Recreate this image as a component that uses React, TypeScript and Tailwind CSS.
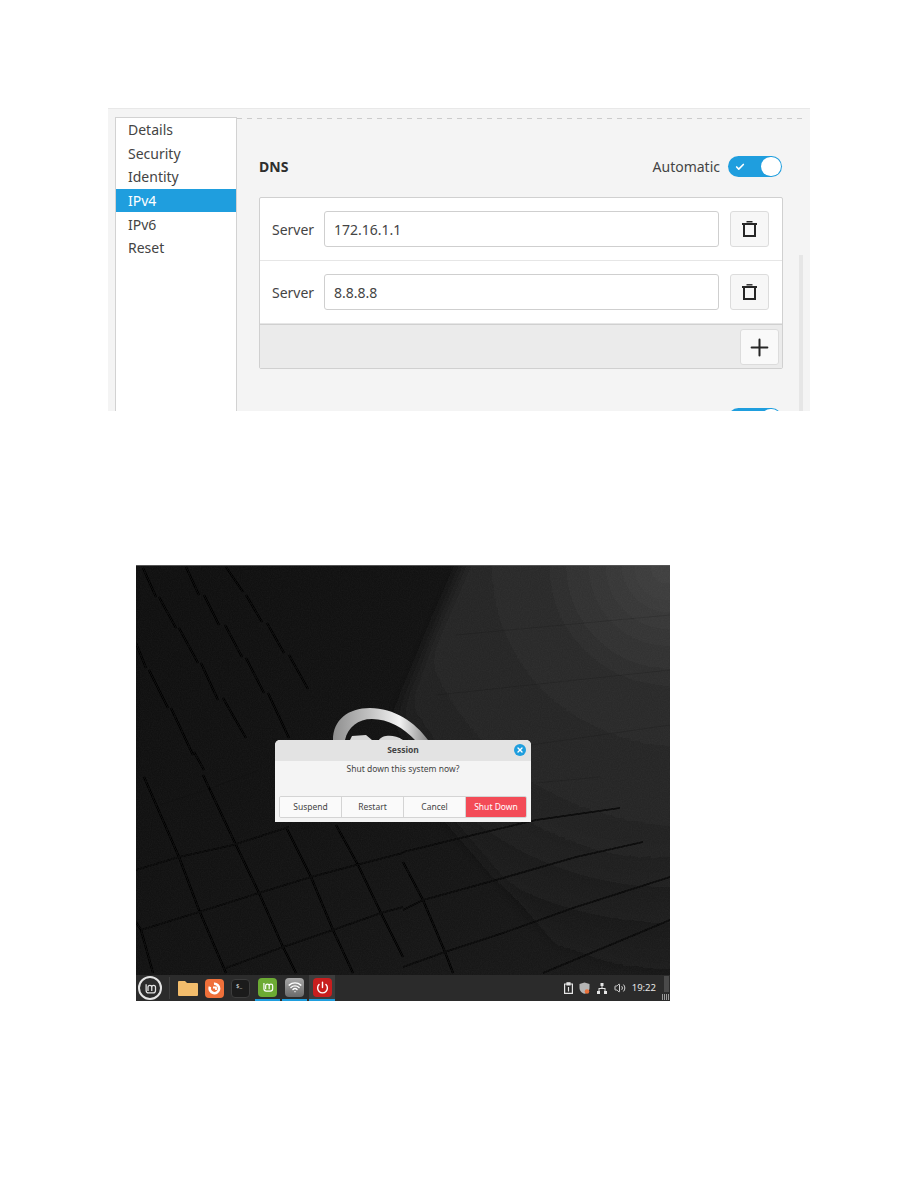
import { Check, Plus, Power, Wifi, X, Volume2 } from "lucide-react";

const FONT = "font-['Noto_Sans','Open_Sans',sans-serif]";
const TABS = ["Details", "Security", "Identity", "IPv4", "IPv6", "Reset"];

function TrashIcon() {
  return (
    <svg width="15" height="16" viewBox="0 0 15 16" fill="none" stroke="#262626" strokeWidth="2">
      <path d="M0 3h15" />
      <path d="M4.5 .8h6" strokeWidth="1.4" />
      <path d="M2 4v11h11V4" />
    </svg>
  );
}

function Toggle() {
  return (
    <div className="flex items-center justify-between w-[54px] h-[21px] shrink-0 rounded-full bg-[#1f9ede] pl-[7px] pr-px">
      <Check size={10} strokeWidth={4} className="text-white" />
      <div className="w-[20px] h-[19px] rounded-full bg-white" />
    </div>
  );
}

function ServerRow({ value }: { value: string }) {
  return (
    <div className="flex items-center h-[63px] pl-[12px] pr-[13px] border-b border-[#e6e6e6]">
      <span className="w-[52px] text-[14px] text-[#444444]">Server</span>
      <div className="flex items-center w-[395px] h-[36px] px-[9px] bg-white border border-[#cfcfcf] rounded-[3px] text-[14px] text-[#444444]">
        {value}
      </div>
      <button className="flex items-center justify-center w-[39px] h-[36px] ml-[11px] bg-[#f7f7f7] border border-[#dcdcdc] rounded-[3px]">
        <TrashIcon />
      </button>
    </div>
  );
}

function SettingsPanel() {
  return (
    <div className="flex w-[702px] h-[303px] ml-[108px] overflow-hidden bg-[#f4f4f4] border-t border-[#e8e8e8]">
      <div className="w-[122px] h-[320px] ml-[7px] mt-[8px] shrink-0 bg-white border border-[#d2d2d2]">
        {TABS.map((t) => (
          <div
            key={t}
            className={`flex items-center h-[23.6px] pl-[12px] text-[14px] ${t === "IPv4" ? "bg-[#1f9ede] text-white" : "text-[#444444]"}`}
          >
            {t}
          </div>
        ))}
      </div>
      <div className="flex-1 mt-[9px]">
        <div className="h-px mr-[8px] bg-[repeating-linear-gradient(90deg,#cccccc_0_5px,transparent_5px_10px)]" />
        <div className="flex">
          <div className="w-[524px] ml-[22px] shrink-0">
            <div className="flex items-center justify-between h-[21px] mt-[37px] pr-px">
              <span className="text-[14px] font-bold text-[#2e2e2e]">DNS</span>
              <div className="flex items-center gap-[8px]">
                <span className="text-[14px] text-[#444444]">Automatic</span>
                <Toggle />
              </div>
            </div>
            <div className="mt-[20px] h-[172px] bg-white border border-[#d0d0d0] rounded-[2px] overflow-hidden">
              <ServerRow value="172.16.1.1" />
              <ServerRow value="8.8.8.8" />
              <div className="flex justify-end items-center h-[45px] pr-[3px] bg-[#ebebeb] border-t border-[#d0d0d0]">
                <button className="flex items-center justify-center w-[39px] h-[36px] bg-[#f9f9f9] border border-[#dcdcdc] rounded-[3px]">
                  <Plus size={27} strokeWidth={1.8} className="text-[#262626]" />
                </button>
              </div>
            </div>
            <div className="flex justify-end mt-[39px] pr-px">
              <Toggle />
            </div>
          </div>
          <div className="w-[4px] h-[200px] ml-[16px] mt-[136px] bg-[#e6e6e6]" />
        </div>
      </div>
    </div>
  );
}

// wallpaper: dark extruded blocks, plus the silver edge of the mint logo
function Wallpaper() {
  const shadows = [
    "M7 3L20 32", "M23 32L40 63", "M43 63L62 98", "M65 98L82 135",
    "M50 2L63 30", "M68 30L83 60", "M89 60L106 92", "M110 93L128 128",
    "M90 2L107 27", "M110 30L126 57", "M131 58L148 88", "M153 90L172 124",
    "M0 78L10 103", "M13 105L32 143", "M35 143L57 190", "M58 187L68 205",
    "M87 133L110 173", "M132 128L153 173",
    "M8 212L43 292L63 345L90 408",
    "M67 210L100 280L123 328L147 382L160 408",
    "M150 262L175 312L197 365L217 408",
    "M200 260L222 300L245 348L267 392",
    "M0 357L5 365L17 408",
    "M267 297L287 335L309 387L317 408",
  ];
  const rising = [
    "M0 305L43 292L97 280L153 262",
    "M5 365L63 347L123 328L175 312L220 300L267 288",
    "M90 403L147 382L197 365L245 348L267 342",
    "M267 287L337 270L400 255L484 243",
    "M267 345L287 335L360 315L440 292L507 277",
    "M267 402L309 387L367 368L437 343L534 312",
    "M407 408L534 355",
  ];
  const faint = [
    "M23 240L70 225L123 205",
    "M400 218L464 212",
    "M290 195L534 160",
    "M300 130L534 105",
    "M320 70L534 50",
  ];
  return (
    <svg className="absolute inset-0" width="534" height="410" viewBox="0 0 534 410">
      <defs>
        <linearGradient id="base" x1="0" y1="0.2" x2="1" y2="0.9">
          <stop offset="0" stopColor="#101010" />
          <stop offset="0.45" stopColor="#131313" />
          <stop offset="1" stopColor="#1a1a1a" />
        </linearGradient>
        <radialGradient id="beam" gradientUnits="userSpaceOnUse" cx="534" cy="0" r="430">
          <stop offset="0" stopColor="#424242" />
          <stop offset="0.3" stopColor="#2b2b2b" />
          <stop offset="0.62" stopColor="#242424" />
          <stop offset="1" stopColor="#1a1a1a" stopOpacity="0" />
        </radialGradient>
        <linearGradient id="ring" x1="0" y1="0" x2="1" y2="0">
          <stop offset="0" stopColor="#8f8f8f" />
          <stop offset="0.4" stopColor="#c4c4c4" />
          <stop offset="0.7" stopColor="#f2f2f2" />
          <stop offset="1" stopColor="#8a8a8a" />
        </linearGradient>
        <filter id="soft6" x="-20%" y="-20%" width="140%" height="140%">
          <feGaussianBlur stdDeviation="7" />
        </filter>
        <filter id="soft1" x="-5%" y="-5%" width="110%" height="110%">
          <feGaussianBlur stdDeviation="0.5" />
        </filter>
        {/* fine grain so the dark gradient doesn't band */}
        <filter id="grain" x="0" y="0" width="100%" height="100%">
          <feTurbulence type="fractalNoise" baseFrequency="0.9" numOctaves="2" seed="3" />
          <feColorMatrix values="0 0 0 0 1  0 0 0 0 1  0 0 0 0 1  0.05 0 0 0 -0.015" />
        </filter>
      </defs>
      <rect width="534" height="410" fill="url(#base)" />
      <path d="M340 -30L600 -30L600 440L420 380L300 240L262 150Z" fill="url(#beam)" filter="url(#soft6)" />
      <rect width="534" height="410" filter="url(#grain)" />
      <g filter="url(#soft1)" fill="none">
        {shadows.map((d) => (
          <path key={d} d={d} stroke="#070707" strokeWidth="2.2" />
        ))}
        {rising.map((d) => (
          <path key={d} d={d} stroke="#0a0a0a" strokeWidth="1.5" />
        ))}
        {faint.map((d) => (
          <path key={d} d={d} stroke="#0a0a0a" strokeWidth="1" strokeOpacity="0.14" />
        ))}
      </g>
      <rect width="534" height="1" fill="#555555" />
      <path d="M197 175C197 155 212 143 234 143C258 143 279 157 292 175L279 175C268 163 252 154 236 154C222 154 212 162 209 175Z" fill="url(#ring)" />
      <path d="M214 175L216 171L230 170L236 175ZM243 175C246 170 258 169 267 175Z" fill="#d6d6d6" />
    </svg>
  );
}

function SessionDialog() {
  const buttons = ["Suspend", "Restart", "Cancel"];
  return (
    <div className="absolute left-[139px] top-[175px] w-[256px] h-[82px] flex flex-col bg-[#f4f4f4] rounded-t-[5px] overflow-hidden">
      <div className="relative flex items-center justify-center h-[21px] bg-[#e3e3e3] text-[8.5px] font-bold text-[#444444]">
        Session
        <div className="absolute right-[5px] top-[4px] flex items-center justify-center w-[12px] h-[12px] rounded-full bg-[#1f9ede]">
          <X size={8} strokeWidth={4} className="text-white" />
        </div>
      </div>
      <div className="h-[35px] pt-[2px] text-center text-[8.5px] text-[#444444]">Shut down this system now?</div>
      <div className="flex h-[22px] mx-[4px] border border-[#d4d4d4] rounded-[2px] overflow-hidden">
        {buttons.map((b) => (
          <div key={b} className="flex items-center justify-center w-[62px] bg-[#fafafa] border-r border-[#d4d4d4] text-[8.5px] text-[#444444]">
            {b}
          </div>
        ))}
        <div className="flex flex-1 items-center justify-center bg-[#f34b57] text-[8.5px] text-white">Shut Down</div>
      </div>
    </div>
  );
}

function MintMark({ size, color }: { size: number; color: string }) {
  return (
    <svg width={size} height={size} viewBox="0 0 24 24" fill="none" stroke={color} strokeWidth="2">
      <path d="M5 5v10a4 4 0 0 0 4 4h7a4 4 0 0 0 4-4V10a3 3 0 0 0-6 0v6M14 10a3 3 0 0 0-6 0v6" />
    </svg>
  );
}

function Taskbar() {
  return (
    <div className="flex items-center h-[26px] bg-[#2b2b2b]">
      <div className="flex items-center justify-center w-[24px] h-[24px] ml-[2px] rounded-full border-2 border-[#e4e4e4] shrink-0">
        <MintMark size={15} color="#e4e4e4" />
      </div>
      <div className="w-px h-[22px] ml-[7px] bg-[#3d3d3d]" />
      {/* folder */}
      <svg className="ml-[8px]" width="20" height="16" viewBox="0 0 20 16">
        <path d="M0 2a1 1 0 0 1 1-1h6l2 2h10a1 1 0 0 1 1 1v11a1 1 0 0 1-1 1H1a1 1 0 0 1-1-1z" fill="#f3bd6c" />
      </svg>
      {/* firefox */}
      <div className="flex items-center justify-center w-[19px] h-[19px] ml-[7px] rounded-[4px] bg-[#f0703a]">
        <svg width="13" height="13" viewBox="0 0 13 13" fill="none" stroke="#fff" strokeWidth="2.6">
          <path d="M6 1.8a4.7 4.7 0 1 1-4 3" />
          <path d="M5 5.5h3v2.5" strokeWidth="1.8" />
        </svg>
      </div>
      {/* terminal */}
      <div className="flex items-start w-[19px] h-[19px] ml-[7px] pl-[4px] pt-[2px] rounded-[4px] bg-[#1b1b1b] border border-[#3c3c3c] text-[6px] leading-[8px] text-[#dddddd]">
        $_
      </div>
      <div className="flex items-center justify-center w-[25px] h-[26px] ml-[5px] border-b-2 border-[#1f9ede]">
        <div className="flex items-center justify-center w-[19px] h-[19px] rounded-[4px] bg-[#6cab34]">
          <MintMark size={14} color="#ffffff" />
        </div>
      </div>
      <div className="flex items-center justify-center w-[25px] h-[26px] ml-[2px] border-b-2 border-[#1f9ede]">
        <div className="flex items-center justify-center w-[19px] h-[19px] rounded-[4px] bg-gradient-to-b from-[#a8a8a8] to-[#6a6a6a]">
          <Wifi size={14} strokeWidth={2.4} className="text-white" />
        </div>
      </div>
      <div className="flex items-center justify-center w-[26px] h-[26px] ml-[2px] bg-[#3d3d3d] border-b-2 border-[#1f9ede]">
        <div className="flex items-center justify-center w-[19px] h-[19px] rounded-[4px] bg-[#c81e1e]">
          <Power size={13} strokeWidth={2.6} className="text-white" />
        </div>
      </div>
      <div className="flex-1" />
      {/* tray */}
      <svg width="9" height="12" viewBox="0 0 9 12" fill="none" stroke="#e6e6e6" strokeWidth="1.2">
        <path d="M.6 2h7.8v9.4H.6z" />
        <path d="M3 .8h3v2H3z" fill="#e6e6e6" />
        <path d="M4.5 5v4.5" />
      </svg>
      <svg className="ml-[6px]" width="11" height="12" viewBox="0 0 11 12">
        <path d="M5.5 0.5 L10.5 2 V6 C10.5 9 8 11 5.5 11.7 C3 11 .5 9 .5 6 V2 Z" fill="#b5b5b5" />
        <circle cx="8" cy="9.5" r="2.3" fill="#e8703a" />
      </svg>
      <svg className="ml-[7px]" width="10" height="11" viewBox="0 0 10 11" fill="#e6e6e6">
        <path d="M3.5 0h3v3h-3zM0 8h3v3H0zM7 8h3v3H7z" />
        <path d="M4.5 3h1v2h3v3h-1V6h-5v2h-1V5h3z" />
      </svg>
      <Volume2 className="ml-[7px] text-[#d6d6d6]" size={12} strokeWidth={2} />
      <span className="ml-[6px] text-[9.5px] text-[#e6e6e6]">19:22</span>
      <div className="flex flex-col items-end justify-between w-[7px] h-[24px] ml-[6px] mr-px">
        <div className="w-[5px] h-[16px] bg-[#4a4a4a]" />
        <div className="w-[7px] h-[6px] bg-[repeating-linear-gradient(90deg,#999999_0_1px,transparent_1px_2px)]" />
      </div>
    </div>
  );
}

export default function App() {
  return (
    <div className={`w-[918px] h-[1188px] pt-[108px] bg-white ${FONT}`}>
      <SettingsPanel />
      <div className="w-[534px] h-[436px] ml-[136px] mt-[154px] flex flex-col">
        <div className="relative flex-1 overflow-hidden">
          <Wallpaper />
          <SessionDialog />
        </div>
        <Taskbar />
      </div>
    </div>
  );
}
